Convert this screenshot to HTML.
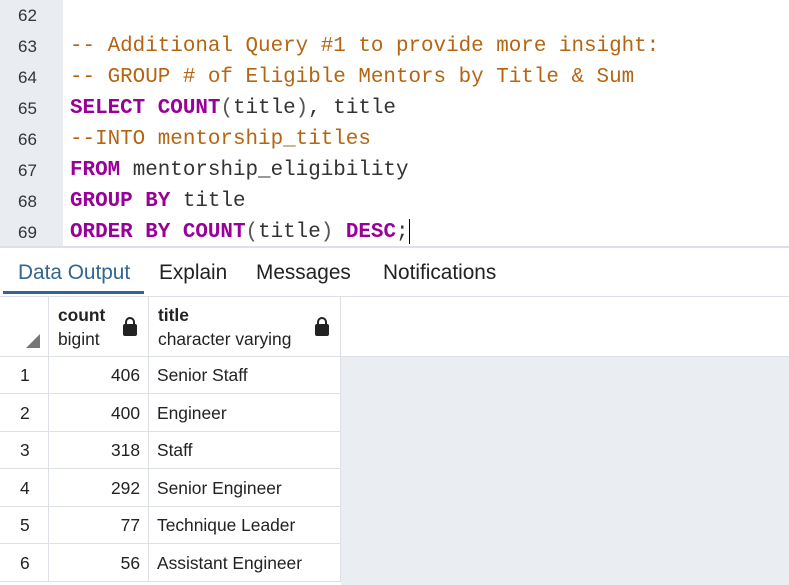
<!DOCTYPE html>
<html><head><style>
body{margin:0;width:789px;height:585px;overflow:hidden;background:#fff;font-family:"Liberation Sans",sans-serif;position:relative}
.gut{position:absolute;left:0;top:0;width:63px;height:247px;background:#e9ecf1}
.ln{position:absolute;left:18px;font-size:17px;color:#333;font-family:"Liberation Sans",sans-serif}
.code{position:absolute;left:70px;font-family:"Liberation Mono",monospace;font-size:20.9px;color:#333;white-space:pre;line-height:25px}
.c{color:#b56512}.k{color:#990099;font-weight:bold}.p{color:#555}
.sep{position:absolute;left:0;top:246px;width:789px;height:2px;background:#dde0e6}
.tab{position:absolute;top:261px;font-size:20.8px;color:#222}
.ul{position:absolute;left:3px;top:291px;width:141px;height:3px;background:#326690}
.hl{position:absolute;left:0;width:789px;height:1px;background:#dde0e6}
.gray{position:absolute;left:341px;top:357px;width:448px;height:228px;background:#eaedf2}
.cell{position:absolute;font-size:17.4px;color:#222}
.v{position:absolute;width:1px;background:#dde0e6}
.lock{position:absolute;width:14px;height:12px;background:#222;border-radius:2px}
.lock:before{content:"";position:absolute;left:2px;top:-7px;width:6px;height:8px;border:2px solid #222;border-bottom:none;border-radius:5px 5px 0 0}
</style></head><body>
<div class="gut"></div>
<div class="ln" style="top:6px">62</div>
<div class="ln" style="top:37px">63</div>
<div class="ln" style="top:68px">64</div>
<div class="ln" style="top:99px">65</div>
<div class="ln" style="top:130px">66</div>
<div class="ln" style="top:161px">67</div>
<div class="ln" style="top:192px">68</div>
<div class="ln" style="top:223px">69</div>
<div class="code c" style="top:34px">-- Additional Query #1 to provide more insight:</div>
<div class="code c" style="top:65px">-- GROUP # of Eligible Mentors by Title &amp; Sum</div>
<div class="code" style="top:96px"><span class="k">SELECT COUNT</span><span class="p">(</span>title<span class="p">)</span>, title</div>
<div class="code c" style="top:127px">--INTO mentorship_titles</div>
<div class="code" style="top:158px"><span class="k">FROM</span> mentorship_eligibility</div>
<div class="code" style="top:189px"><span class="k">GROUP BY</span> title</div>
<div class="code" style="top:220px"><span class="k">ORDER BY COUNT</span><span class="p">(</span>title<span class="p">)</span> <span class="k">DESC</span>;</div>
<div style="position:absolute;left:409px;top:219px;width:1px;height:25px;background:#000"></div>
<div class="sep"></div>
<div class="tab" style="left:18px;color:#326690">Data Output</div>
<div class="tab" style="left:159px">Explain</div>
<div class="tab" style="left:256px">Messages</div>
<div class="tab" style="left:383px">Notifications</div>
<div class="ul"></div>
<div class="hl" style="top:296px"></div>
<div class="gray"></div>
<div class="hl" style="top:356px"></div>
<div class="v" style="left:48px;top:297px;height:284px"></div>
<div class="v" style="left:148px;top:297px;height:284px"></div>
<div class="v" style="left:340px;top:297px;height:284px"></div>
<div style="position:absolute;left:26px;top:334px;width:0;height:0;border-left:14px solid transparent;border-bottom:14px solid #777"></div>
<div class="cell" style="left:58px;top:305px;font-weight:bold">count</div>
<div class="cell" style="left:58px;top:329px">bigint</div>
<div class="lock" style="left:123px;top:324px"></div>
<div class="cell" style="left:158px;top:305px;font-weight:bold">title</div>
<div class="cell" style="left:158px;top:329px">character varying</div>
<div class="lock" style="left:315px;top:324px"></div>
<div style="position:absolute;left:0;top:357px;width:340px">
<div style="position:relative;height:37.5px"><span class="cell" style="left:20px;top:8px">1</span><span class="cell" style="right:200px;top:8px">406</span><span class="cell" style="left:157px;top:8px">Senior Staff</span><div class="hl" style="top:36px;width:341px"></div></div>
<div style="position:relative;height:37.5px"><span class="cell" style="left:20px;top:8px">2</span><span class="cell" style="right:200px;top:8px">400</span><span class="cell" style="left:157px;top:8px">Engineer</span><div class="hl" style="top:36px;width:341px"></div></div>
<div style="position:relative;height:37.5px"><span class="cell" style="left:20px;top:8px">3</span><span class="cell" style="right:200px;top:8px">318</span><span class="cell" style="left:157px;top:8px">Staff</span><div class="hl" style="top:36px;width:341px"></div></div>
<div style="position:relative;height:37.5px"><span class="cell" style="left:20px;top:8px">4</span><span class="cell" style="right:200px;top:8px">292</span><span class="cell" style="left:157px;top:8px">Senior Engineer</span><div class="hl" style="top:36px;width:341px"></div></div>
<div style="position:relative;height:37.5px"><span class="cell" style="left:20px;top:8px">5</span><span class="cell" style="right:200px;top:8px">77</span><span class="cell" style="left:157px;top:8px">Technique Leader</span><div class="hl" style="top:36px;width:341px"></div></div>
<div style="position:relative;height:37.5px"><span class="cell" style="left:20px;top:8px">6</span><span class="cell" style="right:200px;top:8px">56</span><span class="cell" style="left:157px;top:8px">Assistant Engineer</span><div class="hl" style="top:36px;width:341px"></div></div>
</div>
</body></html>
